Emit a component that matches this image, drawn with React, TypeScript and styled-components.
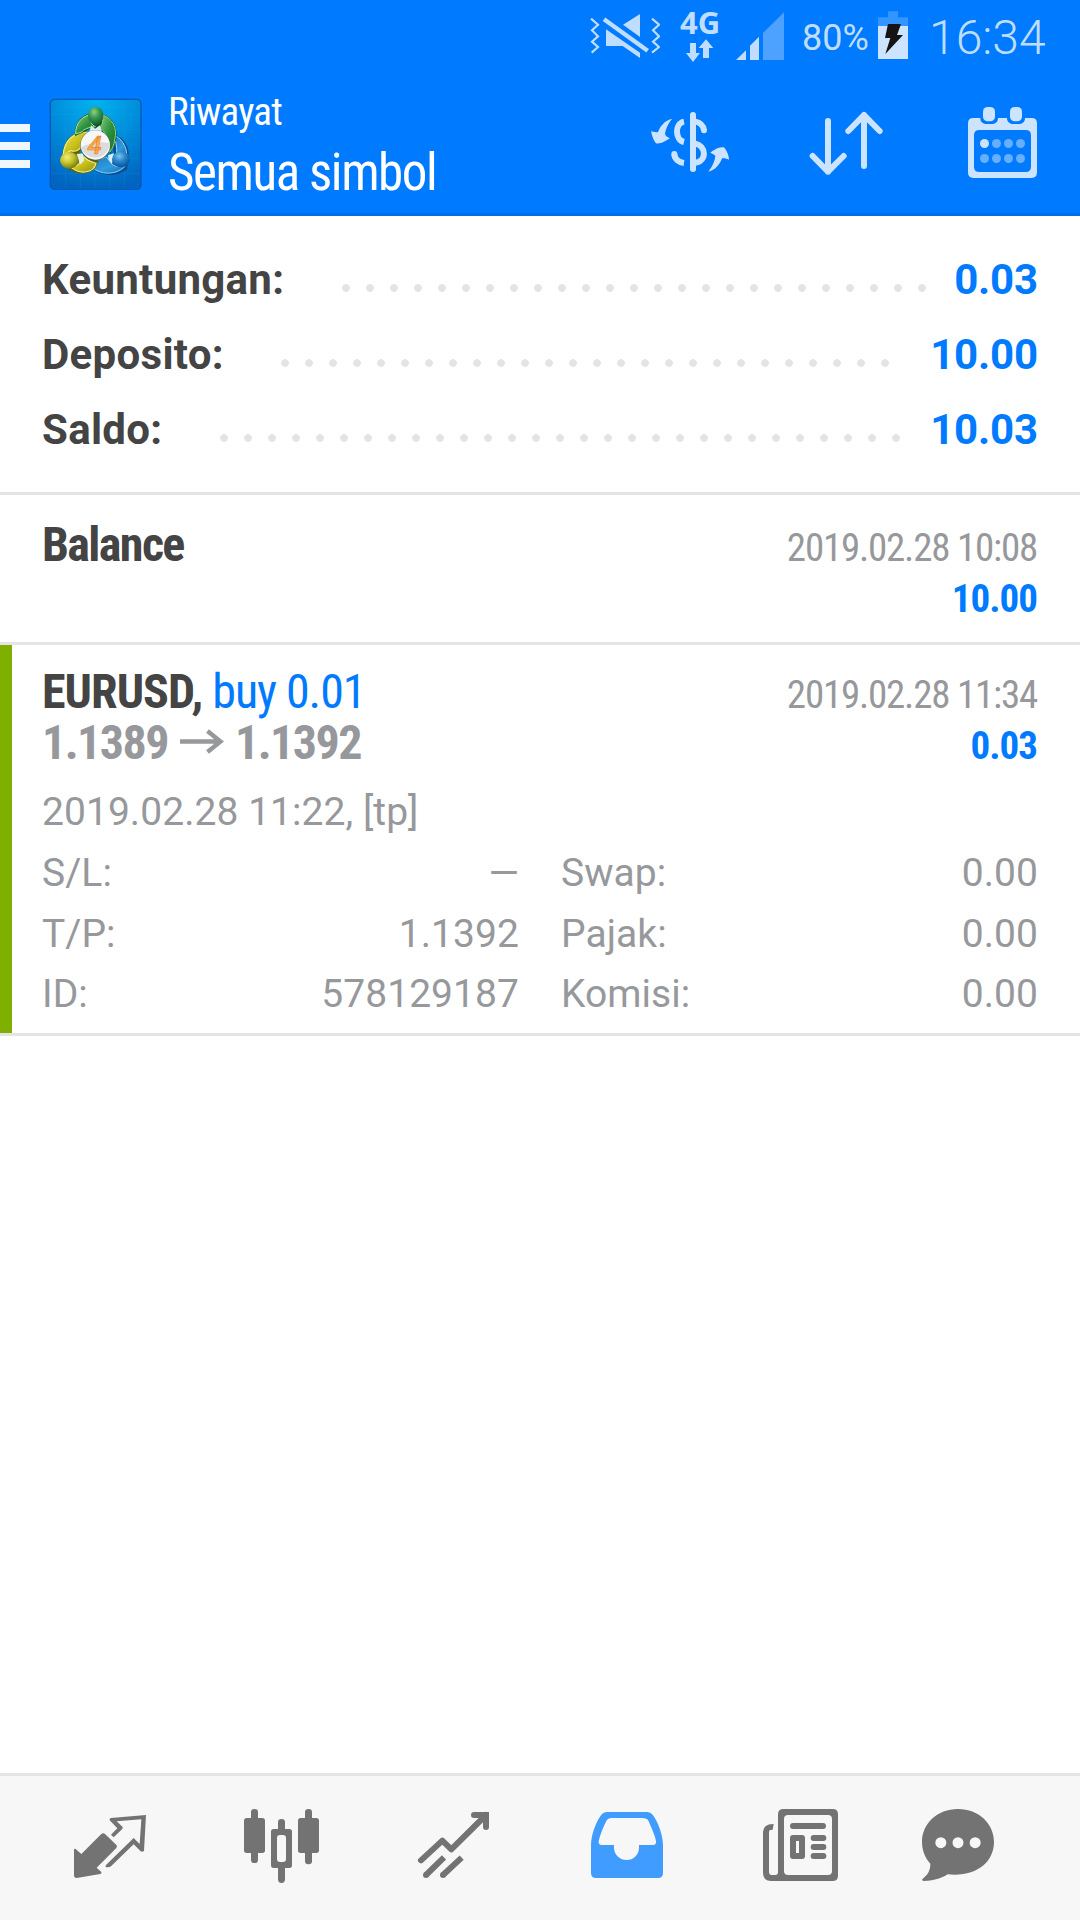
import React from "react";
import styled, { createGlobalStyle } from "styled-components";

const BLUE = "#007aff";
const PALE = "#cce4ff";
const GREY = "#97989c";
const DARK = "#444444";
const LINE = "#e4e4e4";
const ICON = "#737373";

const GlobalStyle = createGlobalStyle`
  * { box-sizing: border-box; }
  body { margin: 0; background: #fff; }
`;

const Screen = styled.div`
  display: flex;
  flex-direction: column;
  width: 1080px;
  height: 1920px;
  overflow: hidden;
  background: #fff;
  font-family: Roboto, "Liberation Sans", sans-serif;
`;

/* ---------- status bar ---------- */
const StatusBar = styled.div`
  display: flex;
  justify-content: flex-end;
  height: 75px;
  padding-right: 34px;
  background: ${BLUE};
  color: #bfdeff;
`;

const Glyph = styled.svg<{ $gap?: number }>`
  display: block;
  flex: none;
  margin-left: ${(p) => p.$gap ?? 0}px;
`;

const Network = styled.div`
  display: flex;
  flex-direction: column;
  align-items: center;
  width: 40px;
  margin-left: 20px;
`;

const NetworkText = styled.span`
  height: 39px;
  font: 700 31px/44px "Noto Sans", "Open Sans", sans-serif;
`;

const StatusText = styled.span<{
  $size: number;
  $width: number;
  $gap: number;
  $line: number;
  $weight: number;
}>`
  width: ${(p) => p.$width}px;
  margin-left: ${(p) => p.$gap}px;
  font-size: ${(p) => p.$size}px;
  font-weight: ${(p) => p.$weight};
  line-height: ${(p) => p.$line}px;
  white-space: nowrap;
`;

/* ---------- title bar ---------- */
const TitleBar = styled.header`
  display: flex;
  align-items: flex-start;
  height: 141px;
  padding-right: 42px;
  background: ${BLUE};
  border-bottom: 3px solid #0070ea;
  color: #fff;
`;

const MenuButton = styled.div`
  display: flex;
  flex-direction: column;
  gap: 10px;
  width: 30px;
  margin-top: 49px;
`;

const MenuBar = styled.i`
  height: 8px;
  background: #f0f7ff;
`;

const Titles = styled.div`
  display: flex;
  flex-direction: column;
  flex: 1;
  margin-left: 22px;
  padding-top: 10px;
`;

const Condensed = styled.span<{
  $size: number;
  $line: number;
  $track: number;
  $bold?: boolean;
  $color?: string;
}>`
  font-family: "Roboto Condensed", Roboto, sans-serif;
  font-stretch: 75%;
  font-size: ${(p) => p.$size}px;
  line-height: ${(p) => p.$line}px;
  letter-spacing: ${(p) => p.$track}px;
  font-weight: ${(p) => (p.$bold ? 700 : 400)};
  color: ${(p) => p.$color ?? "inherit"};
  white-space: nowrap;
`;

/* ---------- summary ---------- */
const Summary = styled.section`
  padding: 26px 42px 25px;
  border-bottom: 3px solid ${LINE};
`;

const SummaryRow = styled.div`
  display: flex;
  height: 75px;
  font-size: 42px;
  font-weight: 700;
  line-height: 75px;
  color: ${DARK};
`;

const SummaryLabel = styled.span`
  letter-spacing: 0.3px;
`;

const Dots = styled.div<{ $count: number }>`
  width: ${(p) => p.$count * 24}px;
  height: 8px;
  margin: 41.500px auto 0 57.500px;
  background: radial-gradient(circle at 4px 4px, #e4e4e4 3.5px, transparent 4.1px) 0 0 / 24px 8px repeat-x;
`;

const SummaryValue = styled.span`
  color: ${BLUE};
  letter-spacing: -0.15px;
`;

/* ---------- history ---------- */
const Deal = styled.section<{ $top: number; $height: number }>`
  height: ${(p) => p.$height}px;
  padding: ${(p) => p.$top}px 42px 0;
  border-bottom: 3px solid ${LINE};
`;

const MarkedDeal = styled(Deal)`
  background: linear-gradient(#7fb000, #7fb000) 0 0 / 12px 388px no-repeat;
`;

const DealHead = styled.div`
  display: flex;
  justify-content: space-between;
`;

const HeadLeft = styled.div`
  display: flex;
  flex-direction: column;
  height: 102px;
`;

const HeadRight = styled.div`
  display: flex;
  flex-direction: column;
  align-items: flex-end;
  height: 102px;
  padding: 4px 1px 0 0;
`;

const Prices = styled.div`
  display: flex;
  height: 51px;
`;

const Details = styled.div`
  display: grid;
  grid-template-columns: 1fr 1fr;
  column-gap: 42px;
  margin-top: 14px;
  font-size: 39px;
  line-height: 60.75px;
  letter-spacing: 0.05px;
  color: ${GREY};
`;

const Wide = styled.div`
  grid-column: 1 / -1;
`;

const Pair = styled.div`
  display: flex;
  justify-content: space-between;
`;

const Filler = styled.div`
  flex: 1;
`;

/* ---------- bottom navigation ---------- */
const Nav = styled.nav`
  display: flex;
  height: 147px;
  padding: 30px 0 0 70px;
  background: #f7f7f7;
  border-top: 3px solid ${LINE};
`;

const NavItem = styled.div<{ $width: number }>`
  width: ${(p) => p.$width}px;
  height: 80px;
`;

const NavIcon = ({ x, children }: { x: number; children: React.ReactNode }) => (
  <Glyph width="80" height="80" viewBox={`${x} 123 240 240`} fill={ICON}>
    {children}
  </Glyph>
);

const LogoGlyph = styled(Glyph)`
  margin: 19px 0 0 16px;
`;

const Logo = () => (
  <LogoGlyph width="100" height="100" viewBox="18 12 300 300">
    <defs>
      <radialGradient id="tile" cx="50%" cy="0%" r="100%">
        <stop offset="0" stopColor="#00b4f0" />
        <stop offset="0.55" stopColor="#0088d8" />
        <stop offset="1" stopColor="#0065c0" />
      </radialGradient>
      <linearGradient id="green" x1="0" y1="0" x2="1" y2="1">
        <stop offset="0" stopColor="#8fce7c" />
        <stop offset="0.5" stopColor="#2f9440" />
        <stop offset="1" stopColor="#14702a" />
      </linearGradient>
      <linearGradient id="yellow" x1="0" y1="0" x2="1" y2="1">
        <stop offset="0" stopColor="#f0e84a" />
        <stop offset="0.5" stopColor="#c9c01c" />
        <stop offset="1" stopColor="#8f9210" />
      </linearGradient>
      <linearGradient id="azure" x1="0" y1="0" x2="1" y2="1">
        <stop offset="0" stopColor="#1b74b8" />
        <stop offset="0.6" stopColor="#2f9be0" />
        <stop offset="1" stopColor="#1470b8" />
      </linearGradient>
      <radialGradient id="headG" cx="40%" cy="30%" r="65%">
        <stop offset="0" stopColor="#8fd08c" />
        <stop offset="0.5" stopColor="#3a9a50" />
        <stop offset="1" stopColor="#1c6b35" />
      </radialGradient>
      <radialGradient id="headY" cx="38%" cy="32%" r="65%">
        <stop offset="0" stopColor="#f2ef78" />
        <stop offset="0.55" stopColor="#c5c02a" />
        <stop offset="1" stopColor="#7d8414" />
      </radialGradient>
      <radialGradient id="headB" cx="40%" cy="30%" r="65%">
        <stop offset="0" stopColor="#7cc6f0" />
        <stop offset="0.5" stopColor="#2a88cc" />
        <stop offset="1" stopColor="#0d5aa2" />
      </radialGradient>
    </defs>
    <rect x="31" y="28" width="272" height="270" rx="13" fill="url(#tile)" stroke="#0758ae" strokeWidth="4" />
    <path d="M77 32V294M121 32V294M165 32V294M209 32V294M253 32V294M35 74H299M35 118H299M35 162H299M35 206H299M35 250H299" stroke="#35aaf0" strokeWidth="1.5" opacity="0.3" fill="none" />
    {/* blue figure */}
    <path d="M214 130C245 138 266 162 266 192L262 236C244 254 212 260 184 250C160 244 144 228 138 206L160 200L206 226L222 196Z" fill="#0a4f92" />
    <path d="M220 134C244 144 260 168 260 196L230 190C232 172 226 150 220 134Z" fill="url(#azure)" stroke="#a0d8f8" strokeWidth="3" />
    <path d="M138 206C158 212 184 210 198 200L216 222C230 236 250 226 256 228C238 248 206 254 182 246C160 240 144 224 138 206Z" fill="url(#azure)" stroke="#8fd0f8" strokeWidth="3" />
    {/* yellow figure */}
    <path d="M144 124C104 122 72 144 68 192L76 228C94 248 130 262 164 238L176 212L120 196L126 150Z" fill="#5e6408" />
    <path d="M143 127C102 124 72 152 70 194L92 182C112 188 128 176 124 152Z" fill="url(#yellow)" stroke="#f4f092" strokeWidth="3.5" />
    <path d="M90 230C114 232 120 218 132 200C144 214 156 216 168 220C162 246 124 258 90 230Z" fill="url(#yellow)" stroke="#f4f092" strokeWidth="3.5" />
    {/* green figure */}
    <path d="M105 138C102 104 120 76 148 72L186 72C218 82 236 112 228 150L212 192L198 160L184 116H150L132 126Z" fill="#0b5520" />
    <path d="M107 132C106 102 124 78 150 75C148 94 156 106 166 110C144 112 132 118 125 126Z" fill="url(#green)" stroke="#b8e4a8" strokeWidth="3" />
    <path d="M185 74C216 84 234 112 224 150C222 166 216 178 210 186C208 156 196 122 178 112C190 104 190 86 185 74Z" fill="url(#green)" stroke="#94d08c" strokeWidth="3" />
    <path d="M153 106L165 116L180 106L186 128H148Z" fill="#d8edf0" />
    <path d="M110 192L130 190L132 212L120 224Z" fill="#e8efda" />
    <path d="M222 190L204 196L206 210L216 222Z" fill="#d8eefa" />
    <ellipse cx="167" cy="77" rx="23" ry="27" fill="url(#headG)" />
    <ellipse cx="88" cy="211" rx="28" ry="25" fill="url(#headY)" />
    <ellipse cx="243" cy="208" rx="27" ry="24" fill="url(#headB)" />
    <circle cx="166" cy="166" r="46" fill="#4a5a30" opacity="0.65" />
    <circle cx="166" cy="165" r="44" fill="#f7f7f8" />
    <path d="M123 172Q166 150 209 160A44 44 0 0 1 123 172Z" fill="#dcdcdf" />
    <text x="164" y="191" textAnchor="middle" fontFamily="Roboto, sans-serif" fontWeight="500" fontStyle="italic" fontSize="78" fill="#f9b04a" stroke="#e8802a" strokeWidth="2">4</text>
  </LogoGlyph>
);

const StatusIcons = () => (
  <StatusBar>
    <Glyph width="70" height="75" viewBox="60 0 210 225" fill="#bfdeff">
      <path d="M63 56L84 74L66 91L84 109L66 125L84 141L65 158M246 56L267 74L249 91L267 109L249 125L267 141L246 158" fill="none" stroke="#bfdeff" strokeWidth="6.500" />
      <path d="M210 42V111L159 74ZM108 88L210 158V174L158 138H108Z" />
      <path d="M102 58L233 152" stroke="#bfdeff" strokeWidth="13" />
    </Glyph>
    <Network>
      <NetworkText>4G</NetworkText>
      <Glyph width="28" height="24" viewBox="354 117 84 72" fill="#bfdeff">
        <path d="M366 129H384V159H396L375 186L354 159H366ZM405 174V144H392L414 118L436 144H423V174Z" />
      </Glyph>
    </Network>
    <Glyph $gap={16} width="48" height="75" viewBox="498 0 144 225" fill="#bfdeff">
      <path d="M498 180L528 151V180ZM540 180V137L567 110V180Z" />
      <path d="M579 180V99L642 37V180Z" fill="#4da2ff" />
    </Glyph>
    <StatusText $size={36} $width={65} $gap={18} $line={76} $weight={400}>80%</StatusText>
    <Glyph $gap={10} width="32" height="75" viewBox="921 0 96 225">
      <path d="M954 34H984V52H1014V78H924V52H954Z" fill="#3395ff" />
      <path d="M924 78H1014V177H924Z" fill={PALE} />
      <path d="M954 72H993L981 105H999L946 162L961 114H945Z" fill="#141414" />
    </Glyph>
    <StatusText $size={48} $width={117} $gap={20} $line={75} $weight={300}>16:34</StatusText>
  </StatusBar>
);

const ActionIcon = styled(Glyph)<{ $top: number }>`
  margin-top: ${(p) => p.$top}px;
`;

const HeaderIcons = () => (
  <>
    <ActionIcon $top={35} width="80" height="64" viewBox="60 60 240 192" fill={PALE}>
      <path d="M126 87C114 88 94 100 84 126C76 128 69 125 64 123C64 136 72 152 78 160C90 164 108 152 120 145C114 142 107 139 105 133C107 116 116 99 126 87Z" />
      <path d="M235 245C246 244 267 232 276 205C284 204 290 206 297 209C297 196 290 181 283 173C270 168 252 180 241 188C247 191 254 193 256 198C254 216 245 233 235 245Z" />
      <path d="M162 95C134 100 134 149 162 156M133 192C134 208 146 217 162 219" fill="none" stroke={PALE} strokeWidth="18" />
      <circle cx="133" cy="192" r="9" />
      <path d="M189 75V237" stroke={PALE} strokeWidth="18" strokeLinecap="round" />
      <path d="M194 94C210 97 220 104 222 121M194 160C230 168 232 214 194 219" fill="none" stroke={PALE} strokeWidth="18" strokeLinecap="round" />
    </ActionIcon>
    <ActionIcon $top={35} $gap={78} width="76" height="66" viewBox="534 60 228 198" fill="none" stroke={PALE} strokeWidth="18" strokeLinecap="round" strokeLinejoin="round">
      <path d="M594 93V245M548 198L594 245L641 198M702 228V75M655 123L702 75L749 123" />
    </ActionIcon>
    <ActionIcon $top={31} $gap={83} width="71" height="73" viewBox="1011 48 213 219" fill={PALE}>
      <path fillRule="evenodd" d="M1030 84H1051V87C1051 96 1061 102 1070 102H1084C1096 102 1104 96 1104 84H1131C1131 96 1140 102 1151 102H1165C1177 102 1185 96 1185 84H1205Q1221 84 1221 100V247Q1221 264 1205 264H1030Q1014 264 1014 247V100Q1014 84 1030 84ZM1048 120Q1032 120 1032 136V230Q1032 246 1048 246H1187Q1203 246 1203 230V136Q1203 120 1187 120Z" />
      <rect x="1059" y="51" width="36" height="43" rx="14" />
      <rect x="1140" y="51" width="36" height="43" rx="14" />
      <circle cx="1063.500" cy="160.500" r="13.500" />
      <g fill="#66afff">
        {[1099.5, 1135.5, 1171.5].map((cx) => (
          <circle key={cx} cx={cx} cy="160.500" r="13.500" />
        ))}
        {[1063.5, 1099.5, 1135.5, 1171.5].map((cx) => (
          <circle key={cx} cx={cx} cy="205.500" r="13.500" />
        ))}
      </g>
    </ActionIcon>
  </>
);

const PriceArrow = styled(Glyph)`
  margin: 0 11px 0 12px;
`;

const summary = [
  { label: "Keuntungan:", value: "0.03", dots: 25 },
  { label: "Deposito:", value: "10.00", dots: 26 },
  { label: "Saldo:", value: "10.03", dots: 29 },
];

const details = [
  ["S/L:", "—"],
  ["Swap:", "0.00"],
  ["T/P:", "1.1392"],
  ["Pajak:", "0.00"],
  ["ID:", "578129187"],
  ["Komisi:", "0.00"],
];

const Stamp = ({ time, amount }: { time: string; amount: string }) => (
  <HeadRight>
    <Condensed $size={39} $line={51} $track={-1.22} $color={GREY}>{time}</Condensed>
    <Condensed $size={39} $line={51} $track={-1} $bold $color={BLUE}>{amount}</Condensed>
  </HeadRight>
);

export default function App() {
  return (
    <Screen>
      <GlobalStyle />
      <StatusIcons />
      <TitleBar>
        <MenuButton>
          <MenuBar />
          <MenuBar />
          <MenuBar />
        </MenuButton>
        <Logo />
        <Titles>
          <Condensed $size={39} $line={54} $track={-0.8}>Riwayat</Condensed>
          <Condensed $size={51} $line={67} $track={-1.42}>Semua simbol</Condensed>
        </Titles>
        <HeaderIcons />
      </TitleBar>

      <Summary>
        {summary.map((row) => (
          <SummaryRow key={row.label}>
            <SummaryLabel>{row.label}</SummaryLabel>
            <Dots $count={row.dots} />
            <SummaryValue>{row.value}</SummaryValue>
          </SummaryRow>
        ))}
      </Summary>

      <Deal $top={24} $height={150}>
        <DealHead>
          <Condensed $size={48} $line={51} $track={-1.6} $bold $color={DARK}>Balance</Condensed>
          <Stamp time="2019.02.28 10:08" amount="10.00" />
        </DealHead>
      </Deal>

      <MarkedDeal $top={21} $height={391}>
        <DealHead>
          <HeadLeft>
            <Condensed $size={48} $line={51} $track={-0.95} $bold $color={DARK}>
              EURUSD, <Condensed $size={48} $line={51} $track={-1.05} $color={BLUE}>buy 0.01</Condensed>
            </Condensed>
            <Prices>
              <Condensed $size={48} $line={51} $track={-1.55} $bold $color={GREY}>1.1389</Condensed>
              <PriceArrow width="44" height="51" viewBox="0 0 44 51" fill="none" stroke={GREY} strokeWidth="4.500">
                <path d="M0 24.500H41M27.500 14L40.500 24.500L27.500 35" />
              </PriceArrow>
              <Condensed $size={48} $line={51} $track={-1.55} $bold $color={GREY}>1.1392</Condensed>
            </Prices>
          </HeadLeft>
          <Stamp time="2019.02.28 11:34" amount="0.03" />
        </DealHead>
        <Details>
          <Wide>2019.02.28 11:22, [tp]</Wide>
          {details.map(([label, value]) => (
            <Pair key={label}>
              <span>{label}</span>
              <span>{value}</span>
            </Pair>
          ))}
        </Details>
      </MarkedDeal>

      <Filler />

      <Nav>
        <NavItem $width={172}>
          <NavIcon x={90}>
            <path d="M102 254Q103 250 107 252L124 267L184 207Q190 202 195 207L230 241Q232 245 229 249L170 308L184 321Q186 325 181 327L110 339Q102 339 102 331Z" />
            <path fillRule="evenodd" d="M212 159L318 150L312 257Q308 262 302 259L281 238L213 304Q206 309 196 305L198 300L281 219L299 237L304 163L230 169L248 186Q249 190 246 193L221 217L213 209L232 190L209 166Q208 161 212 159Z" />
          </NavIcon>
        </NavItem>
        <NavItem $width={172}>
          <NavIcon x={606}>
            <rect x="612" y="159" width="63" height="105" rx="8" />
            <rect x="633" y="132" width="21" height="162" rx="10" />
            <rect x="774" y="159" width="63" height="105" rx="8" />
            <rect x="795" y="132" width="21" height="166" rx="10" />
            <path fillRule="evenodd" d="M714 192V172Q714 162 724.500 162T735 172V192H748Q756 192 756 200V301Q756 309 748 309H735V343Q735 354 724.500 354T714 343V309H701Q693 309 693 301V200Q693 192 701 192ZM720 210Q711 210 711 219V282Q711 291 720 291H729Q738 291 738 282V219Q738 210 729 210Z" />
          </NavIcon>
        </NavItem>
        <NavItem $width={173}>
          <NavIcon x={1122}>
            <g fill="none" stroke={ICON} strokeWidth="18" strokeLinejoin="round">
              <path strokeLinecap="round" d="M1143 286L1207 227L1234 253L1338 150M1302 150H1338V186" />
              <path d="M1158 330L1212 277M1209 330L1265 278" />
            </g>
            <path d="M1320 141H1347V168Z" />
            <circle cx="1158" cy="330" r="9" />
            <circle cx="1209" cy="330" r="9" />
          </NavIcon>
        </NavItem>
        <NavItem $width={174}>
          <NavIcon x={141}>
            <path fill="#409cff" fillRule="evenodd" d="M200 141H322Q332 141 338 149C356 174 369 210 369 242V324Q369 339 354 339H168Q153 339 153 324V242C153 210 166 174 184 149Q190 141 200 141ZM216 159Q203 159 199 168C190 186 180 210 176 228Q174 240 186 240H222V248C222 269 240 285 260 285C280 285 297 269 297 248V240H338Q350 240 348 228C345 212 334 188 326 169Q322 159 305 159Z" />
          </NavIcon>
        </NavItem>
        <NavItem $width={157}>
          <NavIcon x={663}>
            <path fillRule="evenodd" d="M731 132H878Q894 132 894 148V332Q894 348 878 348H693Q669 348 669 323V200Q671 176 701 177L698 194Q687 193 687 201V320Q687 330 697 330H706Q714 330 714 321V148Q714 132 731 132ZM744 150Q732 150 732 162V318Q732 330 744 330H864Q876 330 876 318V162Q876 150 864 150Z" />
            <rect x="750" y="174" width="108" height="18" rx="9" />
            <path fillRule="evenodd" d="M759 210H786Q795 210 795 219V273Q795 282 786 282H759Q750 282 750 273V219Q750 210 759 210ZM768 228V264H777V228Z" />
            <rect x="812" y="210" width="47" height="18" rx="9" />
            <rect x="812" y="237" width="47" height="18" rx="9" />
            <rect x="812" y="264" width="47" height="18" rx="9" />
          </NavIcon>
        </NavItem>
        <NavItem $width={80}>
          <NavIcon x={1134}>
            <path d="M1254 132C1316 132 1362 176 1362 231C1362 293 1306 337 1223 328C1201 342 1175 348 1153 348Q1143 347 1148 341C1163 330 1171 316 1171 296C1156 280 1146 257 1146 231C1146 176 1192 132 1254 132Z" />
            <g fill="#f7f7f7">
              <circle cx="1202.500" cy="233" r="16.500" />
              <circle cx="1254" cy="233" r="16.500" />
              <circle cx="1305.500" cy="233" r="16.500" />
            </g>
          </NavIcon>
        </NavItem>
      </Nav>
    </Screen>
  );
}
